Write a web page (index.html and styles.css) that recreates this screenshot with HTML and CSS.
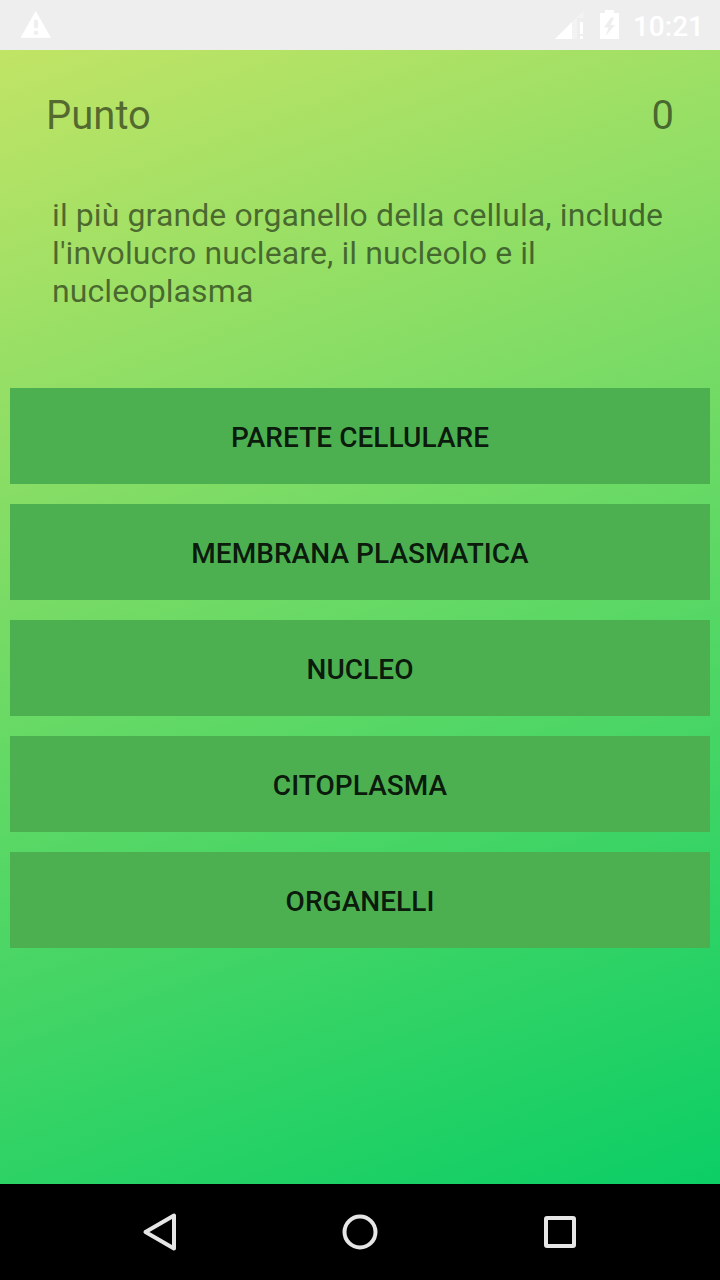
FILE: index.html
```html
<!DOCTYPE html>
<html lang="it">
<head>
    <meta charset="UTF-8">
    <meta name="viewport" content="width=device-width,initial-scale=1.0">
    <title>Quiz</title>
    <link rel="stylesheet" href="styles.css">
</head>
<body>
    <div class="status-bar">
        <svg class="icon-warning" width="32" height="28" viewBox="0 0 32 28">
            <path fill="#fff" fill-rule="evenodd" d="M15.700 .5 30.500 26.500H1zM13.700 8.700v8.600h4.600V8.700zM13.700 19.700v4.200h4.600v-4.200z" stroke="#fff" stroke-width=".6" stroke-linejoin="round"/>
        </svg>
        <div class="status-right">
            <svg class="icon-signal" width="29" height="28" viewBox="0 0 29 28">
                <path fill="#fff" fill-opacity=".3" d="M17 11 28.500 0v7H22v21h-5z"/>
                <path fill="#fff" d="M0 28 17 11v17zM25 11h3v12h-3zM25 25h3v3h-3z"/>
            </svg>
            <svg class="icon-battery" width="19" height="29" viewBox="0 0 19 29">
                <path fill="#fff" fill-rule="evenodd" d="M5 0h9v3h5v26H0V3h5zM11 7.500 4 17.500h4.500l-3 8.500L15 15h-4.500l3.500-7.500z"/>
            </svg>
            <span class="clock">10:21</span>
        </div>
    </div>

    <div class="quiz">
        <div class="score">
            <span>Punto</span>
            <span>0</span>
        </div>
        <p class="question">il più grande organello della cellula, include l'involucro nucleare, il nucleolo e il nucleoplasma</p>
        <div class="answers">
            <button class="answer">Parete cellulare</button>
            <button class="answer">Membrana plasmatica</button>
            <button class="answer">Nucleo</button>
            <button class="answer">Citoplasma</button>
            <button class="answer">Organelli</button>
        </div>
    </div>

    <div class="nav-bar">
        <svg width="40" height="40" viewBox="0 0 40 40">
            <path d="M34 3.500v33L5.500 20z"/>
        </svg>
        <svg width="40" height="40" viewBox="0 0 40 40">
            <circle cx="20" cy="20" r="15.500"/>
        </svg>
        <svg width="40" height="40" viewBox="0 0 40 40">
            <rect x="6" y="6" width="28" height="28" rx="1"/>
        </svg>
    </div>
</body>
</html>
```
FILE: styles.css
```css
*{ box-sizing: border-box;}
body{ margin: 0; height: 1280px; display: flex; flex-direction: column; font-family: Roboto, "Liberation Sans", sans-serif; color: rgba(0,0,0,.54);}
svg{ display: block;}

/*status bar*/
.status-bar{ height: 50px; padding: 0 16px 0 20px; display: flex; justify-content: space-between; align-items: center; background: #eee; color: #fff;}
.status-right{ height: 50px; display: flex; align-items: center;}
.icon-signal{ margin-right: 16px;}
.icon-battery{ margin: 0 14px 1px 0;}
.clock{ font-size: 28px; font-weight: 500; line-height: 32px; padding-top: 3px;}

/*quiz*/
.quiz{ flex: 1; background: linear-gradient(160deg, #c1e465, #0bce65);}
.score{ display: flex; justify-content: space-between; padding: 42px 46px 0 46px; font-size: 40px; line-height: 47px;}
.question{ height: 192px; margin: 57px 50px 0 52px; font-size: 32px; line-height: 38px; letter-spacing: .1px;}
.answers{ display: flex; flex-direction: column; gap: 20px; padding: 0 10px;}
.answer{ height: 96px; padding: 3px 0 0; border: 0; background: #4caf50; font-family: inherit; font-size: 28px; font-weight: 500; letter-spacing: .05px; text-transform: uppercase; color: rgba(0,0,0,.87);}

/*navigation bar*/
.nav-bar{ height: 96px; display: flex; justify-content: center; align-items: center; gap: 160px; background: #000;}
.nav-bar svg{ fill: none; stroke: #e6e6e6; stroke-width: 4; stroke-linejoin: round;}
```
